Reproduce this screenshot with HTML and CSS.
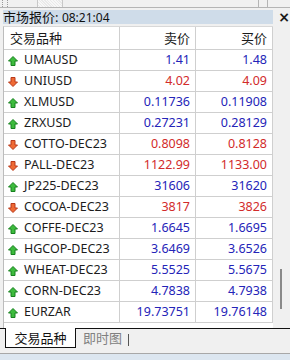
FILE: index.html
```html
<!DOCTYPE html>
<html lang="zh">
  <head>
    <meta charset="UTF-8" />
    <meta name="viewport" content="width=device-width, initial-scale=1.0" />
    <title>市场报价</title>
    <link rel="stylesheet" href="styles.css">
  </head>
  <body>
    <div class="toolbar">
      <span class="grip"></span>
      <span class="slot"></span>
      <span class="grip grip-right"></span>
    </div>

    <div class="title-row">
      <div class="title">市场报价: <span class="time">08:21:04</span></div>
      <span class="close">×</span>
    </div>

    <div class="list-wrap">
      <div class="list">
        <div class="row head">
          <div class="cell">交易品种</div>
          <div class="cell num">卖价</div>
          <div class="cell num">买价</div>
        </div>
        <div id="rows"></div>
        <div class="empty"></div>
      </div>
      <div class="scrollbar"><div class="thumb"></div></div>
    </div>

    <div class="tabs">
      <div class="tab active">交易品种</div>
      <div class="tab">即时图</div>
      <span class="tab-sep"></span>
    </div>
    <div class="status"></div>

    <script>
      const quotes = [
        ["UMAUSD", "up", "1.41", "1.48"],
        ["UNIUSD", "down", "4.02", "4.09"],
        ["XLMUSD", "up", "0.11736", "0.11908"],
        ["ZRXUSD", "up", "0.27231", "0.28129"],
        ["COTTO-DEC23", "down", "0.8098", "0.8128"],
        ["PALL-DEC23", "down", "1122.99", "1133.00"],
        ["JP225-DEC23", "up", "31606", "31620"],
        ["COCOA-DEC23", "down", "3817", "3826"],
        ["COFFE-DEC23", "up", "1.6645", "1.6695"],
        ["HGCOP-DEC23", "up", "3.6469", "3.6526"],
        ["WHEAT-DEC23", "up", "5.5525", "5.5675"],
        ["CORN-DEC23", "up", "4.7838", "4.7938"],
        ["EURZAR", "up", "19.73751", "19.76148"],
      ];

      const upIcon =
        '<svg class="arrow" viewBox="0 0 10 10"><polygon points="5,0.5 9.5,5 7,5 7,9.5 3,9.5 3,5 0.5,5" fill="#3dbb3d" stroke="#17801f" stroke-width="1"/></svg>';
      const downIcon =
        '<svg class="arrow" viewBox="0 0 10 10"><polygon points="5,9.5 9.5,5 7,5 7,0.5 3,0.5 3,5 0.5,5" fill="#ef6a34" stroke="#b8391a" stroke-width="1"/></svg>';

      const rowsEl = document.getElementById("rows");
      quotes.forEach(([symbol, dir, bid, ask]) => {
        const row = document.createElement("div");
        row.classList.add("row", dir);
        row.innerHTML = `<div class="cell sym">${dir === "up" ? upIcon : downIcon}<span>${symbol}</span></div><div class="cell num">${bid}</div><div class="cell num">${ask}</div>`;
        rowsEl.appendChild(row);
      });
    </script>
  </body>
</html>
```

FILE: styles.css
```css
body {
  margin: 0;
  padding: 0;
  width: 290px;
  height: 360px;
  overflow: hidden;
  background-color: #f0f0f0;
  font-family: "Noto Sans", "Noto Sans CJK SC", sans-serif;
  color: #1a1a1a;
}

.toolbar {
  height: 7px;
  border-bottom: 1px solid #b4b4b4;
  display: flex;
  align-items: stretch;
}

.grip {
  width: 4px;
  margin-left: 2px;
  border-left: 1px dotted #9a9a9a;
  border-right: 1px dotted #9a9a9a;
}

.slot {
  width: 24px;
  margin-left: 29px;
  border-left: 1px solid #c8c8c8;
  border-right: 1px solid #c8c8c8;
  background: repeating-linear-gradient(45deg, #f7f7f7 0 1px, #e9e9e9 1px 2px);
}

.grip-right {
  margin-left: auto;
  margin-right: 22px;
  width: 8px;
  border-left: 1px solid #b4b4b4;
  border-right: 1px solid #b4b4b4;
}

.title-row {
  display: flex;
  align-items: center;
  margin-top: 2px;
  height: 14px;
}

.title {
  margin-left: 3px;
  width: 273px;
  height: 14px;
  background-color: #cfdce9;
  font-size: 13px;
  line-height: 14px;
  color: #111;
  white-space: nowrap;
}

.time {
  font-size: 12px;
}

.close {
  margin-left: 5px;
  font-size: 14px;
  font-weight: bold;
  line-height: 14px;
  font-family: "DejaVu Sans", sans-serif;
}

.list-wrap {
  display: flex;
  margin-top: 2px;
}

.list {
  margin-left: 3px;
  width: 269px;
  border-left: 1px solid #bcbcbc;
  border-top: 1px solid #d8d8d8;
  background-color: #fff;
}

.row {
  display: grid;
  grid-template-columns: 116px 76px 77px;
  height: 20px;
  border-bottom: 1px solid #cfcfcf;
  font-size: 12.5px;
  line-height: 20px;
}

.row.head {
  height: 22px;
  line-height: 22px;
  font-size: 13px;
  color: #1a1a1a;
}

.cell {
  border-right: 1px solid #cfcfcf;
  white-space: nowrap;
  overflow: hidden;
  padding-left: 6px;
}

.cell.num {
  text-align: right;
  padding-left: 0;
  padding-right: 5px;
}

.cell.sym {
  display: flex;
  align-items: center;
  padding-left: 4px;
  color: #1c1c1c;
}

.arrow {
  width: 10px;
  height: 10px;
  margin-right: 6px;
  margin-top: 1px;
}

.row.up .num {
  color: #2424b8;
}

.row.down .num {
  color: #d22b2b;
}

.empty {
  height: 5px;
}

.scrollbar {
  width: 17px;
  position: relative;
}

.thumb {
  position: absolute;
  left: 7px;
  top: 243px;
  width: 2px;
  height: 40px;
  background-color: #8a8a8a;
}

.tabs {
  display: flex;
  align-items: flex-start;
  height: 20px;
  border-top: 1px solid #111;
  padding-bottom: 4px;
}

.tab {
  font-size: 13px;
  line-height: 18px;
  padding: 0 6px 0 7px;
  color: #808080;
  white-space: nowrap;
}

.tab.active {
  margin-left: 5px;
  margin-top: -1px;
  width: 69px;
  padding: 1px 0 0;
  color: #111;
  background-color: #fff;
  border-left: 1px solid #111;
  border-right: 1px solid #111;
  border-bottom: 1px solid #111;
  text-align: center;
}

.tab-sep {
  margin-top: 5px;
  width: 1px;
  height: 12px;
  background-color: #555;
}

.status {
  border-top: 1px solid #a8a8a8;
  height: 8px;
  background-color: #dce6f0;
}
```
